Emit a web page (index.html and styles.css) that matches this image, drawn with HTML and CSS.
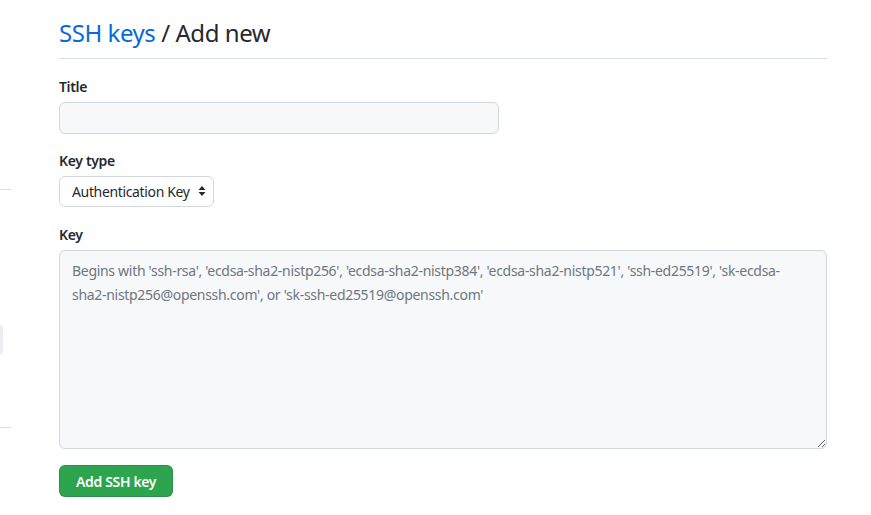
FILE: index.html
```html
<!DOCTYPE html>
<html lang="en">
<head>
<meta charset="utf-8">
<title>Add new SSH key</title>
<link rel="stylesheet" href="styles.css">
</head>
<body>
<div class="layout">
  <aside class="sidebar">
    <div class="side-rule first"></div>
    <div class="side-item"></div>
    <div class="side-rule last"></div>
  </aside>
  <main class="main">
    <div class="subhead">
      <h2 class="subhead-heading"><a href="#" class="crumb">SSH keys</a> / Add new</h2>
    </div>
    <form class="form">
      <div class="form-group">
        <label class="form-label" for="title">Title</label>
        <input id="title" class="form-control title-input" type="text">
      </div>
      <div class="form-group select-group">
        <label class="form-label" for="type">Key type</label>
        <div class="select-wrap">
          <select id="type" class="form-select">
            <option>Authentication Key</option>
            <option>Signing Key</option>
          </select>
          <svg class="select-arrow" width="8" height="12" viewBox="0 0 8 12" aria-hidden="true"><path d="M4 1 L7.5 5 H0.5 Z M4 11 L0.5 7 H7.5 Z" fill="#24292f"/></svg>
        </div>
      </div>
      <div class="form-group">
        <label class="form-label" for="key">Key</label>
        <textarea id="key" class="form-control key-input" placeholder="Begins with 'ssh-rsa', 'ecdsa-sha2-nistp256', 'ecdsa-sha2-nistp384', 'ecdsa-sha2-nistp521', 'ssh-ed25519', 'sk-ecdsa-sha2-nistp256@openssh.com', or 'sk-ssh-ed25519@openssh.com'"></textarea>
      </div>
      <button type="button" class="btn-primary">Add SSH key</button>
    </form>
  </main>
</div>
</body>
</html>
```
FILE: styles.css
```css
* { box-sizing: border-box; }
html, body { margin: 0; padding: 0; background: #fff; }
body {
  font-family: "Noto Sans", "Open Sans", "Liberation Sans", sans-serif;
  font-size: 14px;
  letter-spacing: -0.35px;
  color: #24292f;
}
.layout {
  display: flex;
  gap: 48px;
}
.sidebar {
  width: 11px;
  flex: none;
  padding-top: 189px;
}
.side-rule {
  height: 1px;
  background: #d8dee4;
}
.side-item {
  margin-top: 135px;
  width: 3px;
  height: 29px;
  background: #eaeef2;
  border-radius: 0 6px 6px 0;
}
.side-rule.last { margin-top: 73px; }
.main {
  width: 768px;
  flex: none;
  padding-top: 16px;
}
.subhead {
  border-bottom: 1px solid #d8dee4;
  padding-bottom: 8px;
  margin-bottom: 17px;
}
.subhead-heading {
  margin: 0;
  font-size: 24px;
  font-weight: 400;
  line-height: 34px;
  letter-spacing: -0.45px;
  color: #24292f;
}
.crumb { color: #0969da; text-decoration: none; }
.form-group { margin-bottom: 16px; }
.form-group.select-group { margin-bottom: 17px; }
.form-label {
  display: block;
  font-weight: 600;
  font-size: 14px;
  line-height: 21px;
  margin: 0 0 5px;
}
.form-control {
  display: block;
  font-family: inherit;
  font-size: 14px;
  letter-spacing: inherit;
  color: #24292f;
  background: #f6f8fa;
  border: 1px solid #d0d7de;
  border-radius: 6px;
  outline: none;
}
.title-input { width: 440px; height: 32px; padding: 5px 12px; }
.select-wrap { position: relative; width: 155px; }
.form-select {
  display: block;
  width: 155px;
  height: 31px;
  appearance: none;
  -webkit-appearance: none;
  background: #fff;
  border: 1px solid #d0d7de;
  border-radius: 6px;
  padding: 0 20px 0 12px;
  font-family: inherit;
  font-size: 14px;
  letter-spacing: inherit;
  color: #24292f;
}
.select-arrow { position: absolute; right: 8px; top: 9px; }
.key-input {
  width: 768px;
  height: 199px;
  padding: 8px 30px 8px 12px;
  line-height: 24px;
  letter-spacing: -0.3px;
  resize: vertical;
}
.key-input::placeholder { color: #6e7781; opacity: 1; }
.btn-primary {
  display: block;
  height: 32px;
  padding: 0 16px;
  font-family: inherit;
  font-size: 14px;
  font-weight: 600;
  letter-spacing: inherit;
  color: #fff;
  background: #2da44e;
  border: 1px solid rgba(27, 31, 36, 0.15);
  border-radius: 6px;
}
```
